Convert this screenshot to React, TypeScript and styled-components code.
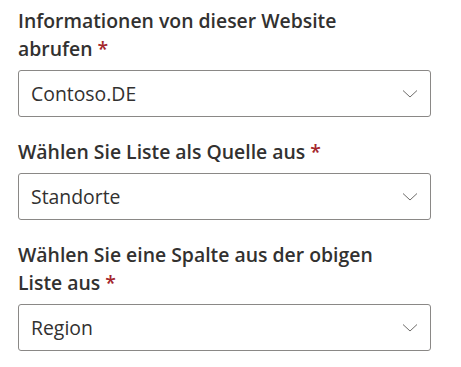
import React from "react";
import styled, { createGlobalStyle } from "styled-components";

const Global = createGlobalStyle`
  html, body { margin: 0; padding: 0; background: #ffffff; }
  body { font-family: "Open Sans", "Noto Sans", sans-serif; color: #323130; }
`;

const Form = styled.div`
  width: 413px;
  padding: 7px 0 0 18px;
  display: flex;
  flex-direction: column;
  gap: 21px;
`;

const Field = styled.div`
  display: flex;
  flex-direction: column;
  gap: 7px;
`;

const Label = styled.label`
  font-size: 19.4px;
  font-weight: 600;
  line-height: 28px;
  color: #323130;
`;

const Required = styled.span`
  color: #a4262c;
  margin-left: 5px;
`;

const Select = styled.div`
  box-sizing: border-box;
  height: 47px;
  border: 1px solid #8a8886;
  border-radius: 3px;
  display: flex;
  align-items: center;
  justify-content: space-between;
  padding: 0 12px 0 12px;
  background: #fff;
`;

const Value = styled.span`
  font-size: 19.4px;
  font-weight: 400;
  color: #323130;
`;

const Chevron = () => (
  <svg width="16" height="10" viewBox="0 0 16 10" fill="none">
    <path d="M1 1.5 L8 8 L15 1.5" stroke="#6e6c6a" strokeWidth="1" />
  </svg>
);

const fields = [
  { label: ["Informationen von dieser Website", "abrufen"], value: "Contoso.DE" },
  { label: ["Wählen Sie Liste als Quelle aus"], value: "Standorte" },
  { label: ["Wählen Sie eine Spalte aus der obigen", "Liste aus"], value: "Region" },
];

export default function App() {
  return (
    <>
      <Global />
      <Form>
        {fields.map((f) => (
          <Field key={f.value}>
            <Label>
              {f.label.map((l, i) => (
                <React.Fragment key={i}>
                  {i > 0 && <br />}
                  {l}
                </React.Fragment>
              ))}
              <Required>*</Required>
            </Label>
            <Select>
              <Value>{f.value}</Value>
              <Chevron />
            </Select>
          </Field>
        ))}
      </Form>
    </>
  );
}
